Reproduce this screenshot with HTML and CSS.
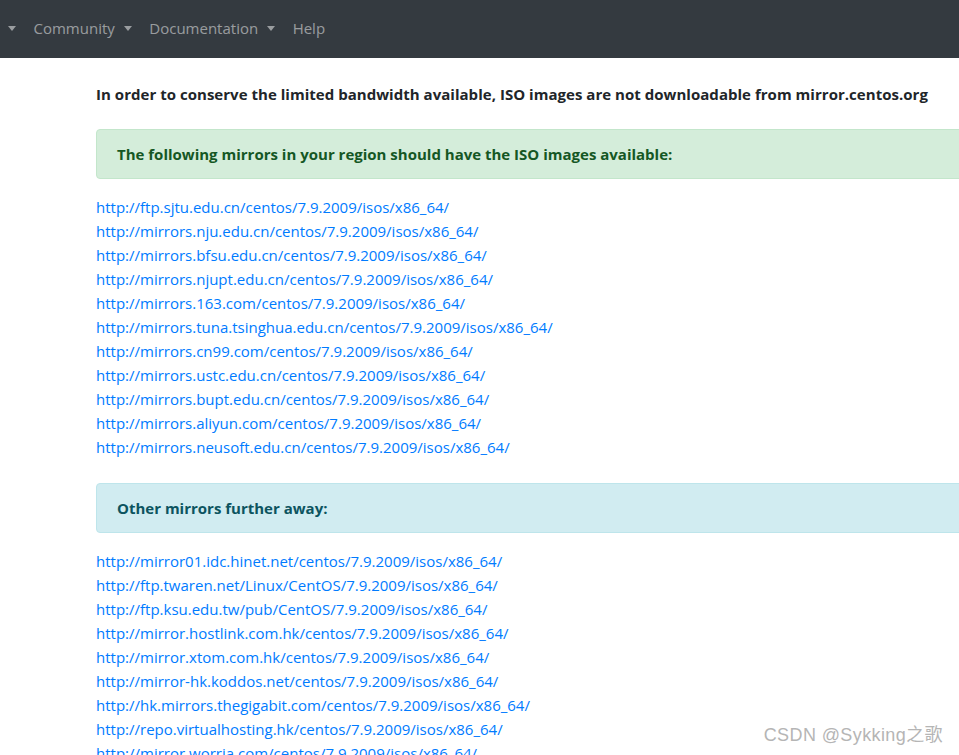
FILE: index.html
```html
<!DOCTYPE html>
<html lang="en">
<head>
<meta charset="utf-8">
<title>CentOS Mirrors</title>
<link rel="stylesheet" href="styles.css">
</head>
<body>
<nav class="navbar">
  <ul class="nav">
    <li class="nav-item"><a class="nav-link toggle" href="#"></a></li>
    <li class="nav-item"><a class="nav-link toggle" href="#">Community</a></li>
    <li class="nav-item"><a class="nav-link toggle" href="#">Documentation</a></li>
    <li class="nav-item"><a class="nav-link" href="#">Help</a></li>
  </ul>
</nav>
<main class="content">
  <p class="lead-note">In order to conserve the limited bandwidth available, ISO images are not downloadable from mirror.centos.org</p>
  <div class="alert alert-success">The following mirrors in your region should have the ISO images available:</div>
  <ul class="mirrors">
    <li><a href="#">http://ftp.sjtu.edu.cn/centos/7.9.2009/isos/x86_64/</a></li>
    <li><a href="#">http://mirrors.nju.edu.cn/centos/7.9.2009/isos/x86_64/</a></li>
    <li><a href="#">http://mirrors.bfsu.edu.cn/centos/7.9.2009/isos/x86_64/</a></li>
    <li><a href="#">http://mirrors.njupt.edu.cn/centos/7.9.2009/isos/x86_64/</a></li>
    <li><a href="#">http://mirrors.163.com/centos/7.9.2009/isos/x86_64/</a></li>
    <li><a href="#">http://mirrors.tuna.tsinghua.edu.cn/centos/7.9.2009/isos/x86_64/</a></li>
    <li><a href="#">http://mirrors.cn99.com/centos/7.9.2009/isos/x86_64/</a></li>
    <li><a href="#">http://mirrors.ustc.edu.cn/centos/7.9.2009/isos/x86_64/</a></li>
    <li><a href="#">http://mirrors.bupt.edu.cn/centos/7.9.2009/isos/x86_64/</a></li>
    <li><a href="#">http://mirrors.aliyun.com/centos/7.9.2009/isos/x86_64/</a></li>
    <li><a href="#">http://mirrors.neusoft.edu.cn/centos/7.9.2009/isos/x86_64/</a></li>
  </ul>
  <div class="alert alert-info">Other mirrors further away:</div>
  <ul class="mirrors">
    <li><a href="#">http://mirror01.idc.hinet.net/centos/7.9.2009/isos/x86_64/</a></li>
    <li><a href="#">http://ftp.twaren.net/Linux/CentOS/7.9.2009/isos/x86_64/</a></li>
    <li><a href="#">http://ftp.ksu.edu.tw/pub/CentOS/7.9.2009/isos/x86_64/</a></li>
    <li><a href="#">http://mirror.hostlink.com.hk/centos/7.9.2009/isos/x86_64/</a></li>
    <li><a href="#">http://mirror.xtom.com.hk/centos/7.9.2009/isos/x86_64/</a></li>
    <li><a href="#">http://mirror-hk.koddos.net/centos/7.9.2009/isos/x86_64/</a></li>
    <li><a href="#">http://hk.mirrors.thegigabit.com/centos/7.9.2009/isos/x86_64/</a></li>
    <li><a href="#">http://repo.virtualhosting.hk/centos/7.9.2009/isos/x86_64/</a></li>
    <li><a href="#">http://mirror.worria.com/centos/7.9.2009/isos/x86_64/</a></li>
  </ul>
</main>
<div class="watermark">CSDN @Sykking之歌</div>
</body>
</html>
```
FILE: styles.css
```css
html, body {
  margin: 0;
  padding: 0;
  height: 755px;
  overflow: hidden;
}
body {
  font-family: "Open Sans", "Noto Sans", "Noto Sans CJK SC", sans-serif;
  font-size: 15px;
  line-height: 24px;
  color: #212529;
  background: #fff;
  position: relative;
}
.navbar {
  height: 58px;
  background: #343a40;
  display: flex;
  align-items: center;
  box-sizing: border-box;
  padding-bottom: 2px;
}
.nav {
  list-style: none;
  margin: 0;
  padding: 0 0 0 8px;
  display: flex;
  align-items: center;
}
.nav-link {
  display: flex;
  align-items: center;
  padding: 0 8.75px;
  color: rgba(255, 255, 255, 0.5);
  text-decoration: none;
  line-height: 24px;
}
.nav-item:first-child .nav-link { padding-left: 0; }
.toggle::after {
  content: "";
  display: inline-block;
  margin-left: 9px;
  border-top: 5px solid;
  border-left: 4.8px solid transparent;
  border-right: 4.8px solid transparent;
}
.nav-item:first-child .toggle::after { margin-left: 0; }
.content {
  margin-left: 96px;
  width: 1100px;
  padding-top: 24px;
}
.lead-note {
  margin: 0 0 23px;
  font-weight: 700;
  letter-spacing: 0.03px;
}
.alert {
  padding: 12px 20px;
  border: 1px solid transparent;
  border-radius: 4px;
  font-weight: 700;
  margin-bottom: 16px;
}
.alert-success {
  color: #155724;
  background: #d4edda;
  border-color: #c3e6cb;
}
.alert-info {
  color: #0c5460;
  background: #d1ecf1;
  border-color: #bee5eb;
}
.mirrors {
  list-style: none;
  margin: 0 0 24px;
  padding: 0;
}
.mirrors a {
  color: #007bff;
  text-decoration: none;
}
.watermark {
  position: absolute;
  right: 16px;
  top: 723px;
  font-family: "Liberation Sans", "Noto Sans CJK SC", sans-serif;
  font-size: 18px;
  letter-spacing: 0.4px;
  color: #b5b5b5;
  line-height: 24px;
}
```
